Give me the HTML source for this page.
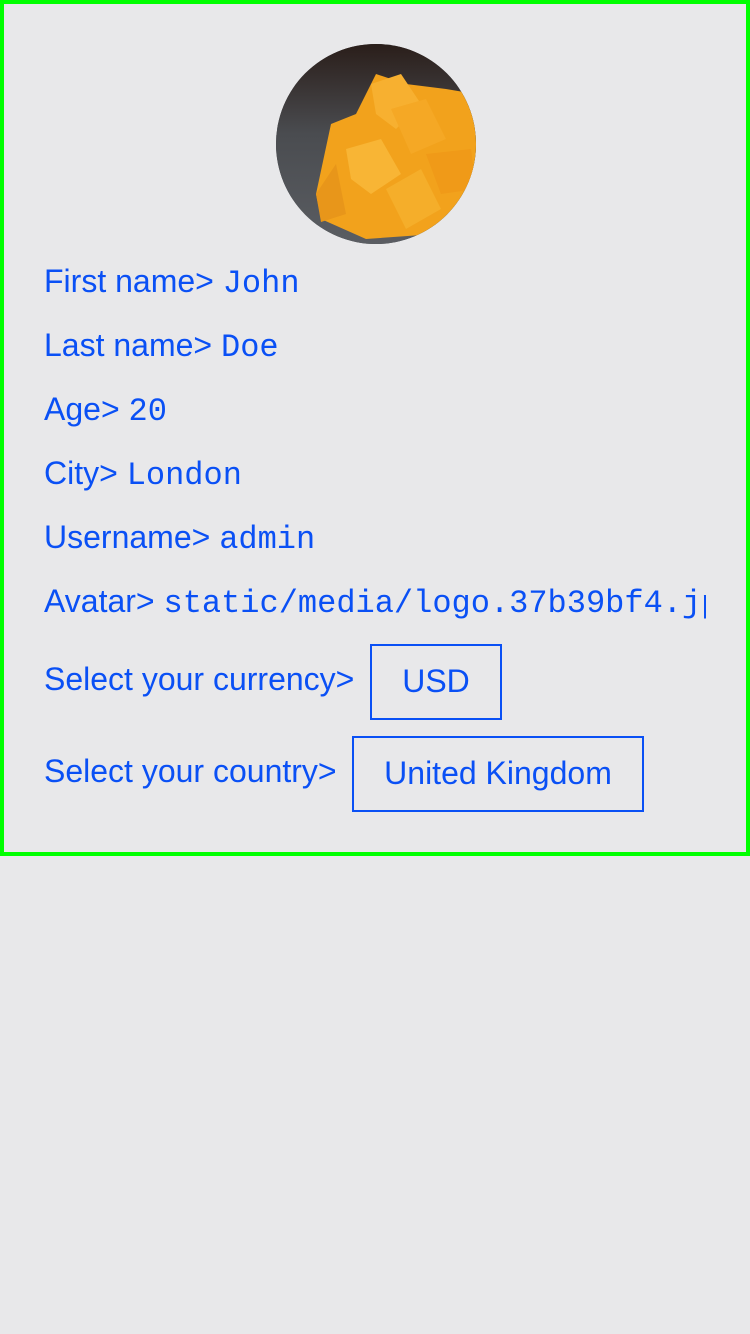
<!DOCTYPE html>
<html><head><style>
body{margin:0;width:750px;height:1334px;background:#e8e8ea;position:relative;font-family:"Liberation Sans",sans-serif;color:#0a50f5;overflow:hidden}
.frame{position:absolute;left:0;top:0;width:742px;height:848px;border:4px solid #00ff00}
.av{position:absolute;left:276px;top:44px;width:200px;height:200px;border-radius:50%;overflow:hidden;background:#3a3b3e}
.row{position:absolute;left:44px;height:40px;line-height:40px;font-size:32px;white-space:nowrap}
.m{font-family:"Liberation Mono",monospace;font-size:32px}
.box{position:absolute;border:2px solid #0a50f5;box-sizing:border-box;font-size:32px;text-align:center}
</style></head><body>
<div class="frame"></div>
<div class="av">
<svg width="200" height="200" viewBox="0 0 200 200">
<defs><linearGradient id="bg" x1="0" y1="0" x2="0" y2="1"><stop offset="0" stop-color="#2a1e1a"/><stop offset="0.45" stop-color="#4a4c50"/><stop offset="1" stop-color="#5a5d62"/></linearGradient></defs>
<rect width="200" height="200" fill="url(#bg)"/>
<path d="M40 150 L55 80 L80 70 L100 30 L130 40 L170 45 L200 50 L200 150 L160 190 L90 195 L45 175Z" fill="#f2a21c"/>
<path d="M95 40 L125 30 L145 60 L120 85 L100 70Z" fill="#f7b030"/>
<path d="M115 65 L150 55 L170 95 L135 110Z" fill="#f5a825"/>
<path d="M70 105 L105 95 L125 130 L95 150 L75 135Z" fill="#f8b535"/>
<path d="M110 145 L145 125 L165 165 L130 185Z" fill="#f5ae2a"/>
<path d="M150 110 L195 105 L200 145 L165 150Z" fill="#f09a18"/>
<path d="M40 150 L60 120 L70 170 L45 178Z" fill="#e8961a"/>
</svg></div>
<div class="row" style="top:261px">First name&gt; <span class="m">John</span></div>
<div class="row" style="top:325px">Last name&gt; <span class="m">Doe</span></div>
<div class="row" style="top:389px">Age&gt; <span class="m">20</span></div>
<div class="row" style="top:453px">City&gt; <span class="m">London</span></div>
<div class="row" style="top:517px">Username&gt; <span class="m">admin</span></div>
<div class="row" style="top:581px;width:662px;overflow:hidden">Avatar&gt; <span class="m">static/media/logo.37b39bf4.jpg</span></div>
<div class="row" style="top:659px">Select your currency&gt;</div>
<div class="box" style="left:370px;top:644px;width:132px;height:76px;line-height:70px">USD</div>
<div class="row" style="top:751px">Select your country&gt;</div>
<div class="box" style="left:352px;top:736px;width:292px;height:76px;line-height:70px">United Kingdom</div>
</body></html>
